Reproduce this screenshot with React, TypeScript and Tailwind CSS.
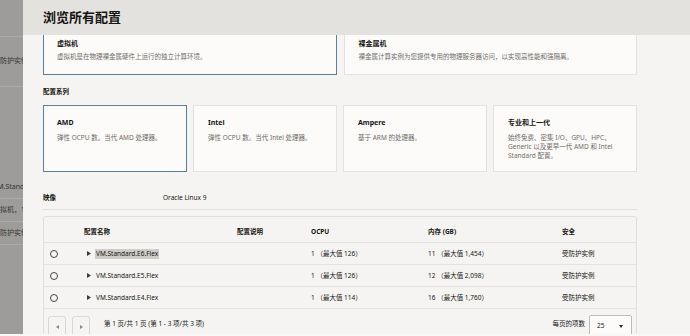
import { ReactNode } from 'react';

const FONT = { fontFamily: '"Noto Sans", "Noto Sans CJK SC", sans-serif' };

const families = [
  { name: 'AMD', desc: ['弹性 OCPU 数。当代 AMD 处理器。'], selected: true },
  { name: 'Intel', desc: ['弹性 OCPU 数。当代 Intel 处理器。'] },
  { name: 'Ampere', desc: ['基于 ARM 的处理器。'] },
  {
    name: '专业和上一代',
    desc: ['始终免费、密集 I/O、GPU、HPC、', 'Generic 以及更早一代 AMD 和 Intel', 'Standard 配置。'],
  },
];

const shapes = [
  { name: 'VM.Standard.E6.Flex', ocpu: '1 （最大值 126）', mem: '11 （最大值 1,454）', highlight: true },
  { name: 'VM.Standard.E5.Flex', ocpu: '1 （最大值 126）', mem: '12 （最大值 2,098）' },
  { name: 'VM.Standard.E4.Flex', ocpu: '1 （最大值 114）', mem: '16 （最大值 1,760）' },
];

const COLS = 'grid grid-cols-[40px_153px_74px_117px_134px_1fr]';

function Caret() {
  return (
    <svg width="4" height="5" viewBox="0 0 4 5" className="shrink-0">
      <path d="M0 0 L4 2.5 L0 5 Z" fill="#3d3b39" />
    </svg>
  );
}

function BackRow({ children, h, border = true }: { children?: ReactNode; h: number; border?: boolean }) {
  return (
    <div
      className={`flex items-center overflow-hidden whitespace-nowrap ${border ? 'border-b border-[#aaa9a7]' : ''}`}
      style={{ height: h }}
    >
      <span className="-ml-[7px] text-[7px] text-[#343331]">{children}</span>
    </div>
  );
}

export default function App() {
  return (
    <div className="relative w-[690px] h-[336px] overflow-hidden bg-[#9d9c9a]" style={FONT}>
      {/* page behind the drawer */}
      <div className="flex flex-col w-[23px]">
        <BackRow h={37} />
        <BackRow h={50}>受防护实例</BackRow>
        <div className="h-[90px]" />
        <BackRow h={22}>VM.Standard</BackRow>
        <BackRow h={23}>虚拟机，1</BackRow>
        <BackRow h={23}>受防护实例</BackRow>
      </div>

      {/* drawer */}
      <div className="absolute top-0 right-0 bottom-[2px] w-[667px] flex flex-col bg-[#f5f4f2] text-[#161513]">
        <div className="h-[35px] shrink-0 flex items-center pl-[20px] bg-[#e4e2df]">
          <h1 className="text-[13px] font-bold leading-none">浏览所有配置</h1>
        </div>

        <div className="flex-1 overflow-hidden pl-[20px]">
          <div className="w-[594px]">
            {/* compute type, scrolled partly out of view */}
            <div className="grid grid-cols-2 gap-[7px] h-[40px]">
              <div className="border-[1.5px] border-t-0 border-[#5f7e97] bg-[#fcfbfa] pl-[13px] pt-[4px]">
                <div className="text-[7px] font-bold leading-[10px]">虚拟机</div>
                <div className="mt-[3px] text-[6.5px] leading-[10px] text-[#6f6c69]">
                  虚拟机是在物理裸金属硬件上运行的独立计算环境。
                </div>
              </div>
              <div className="border border-t-0 border-[#e4e2df] bg-[#fcfbfa] pl-[14px] pt-[4px]">
                <div className="text-[7px] font-bold leading-[10px]">裸金属机</div>
                <div className="mt-[3px] text-[6.5px] leading-[10px] text-[#6f6c69]">
                  裸金属计算实例为您提供专用的物理服务器访问，以实现高性能和强隔离。
                </div>
              </div>
            </div>

            <div className="mt-[12px] text-[6.5px] font-bold leading-[10px]">配置系列</div>

            <div className="mt-[8px] grid grid-cols-4 gap-[6px]">
              {families.map((f) => (
                <div
                  key={f.name}
                  className={`h-[67px] bg-[#fcfbfa] pt-[12px] ${
                    f.selected ? 'border-[1.5px] border-[#5f7e97] pl-[13px]' : 'border border-[#e4e2df] pl-[14px]'
                  }`}
                >
                  <div className="text-[7px] font-bold leading-[10px]">{f.name}</div>
                  <div className="mt-[5px] text-[6.5px] leading-[9px] text-[#6f6c69]">
                    {f.desc.map((d) => (
                      <div key={d}>{d}</div>
                    ))}
                  </div>
                </div>
              ))}
            </div>

            <div className="mt-[21px] flex pb-[6px] border-b border-[#e4e2df] text-[6.5px] leading-[10px]">
              <div className="w-[120px] font-bold">映像</div>
              <div>Oracle Linux 9</div>
            </div>

            {/* shape table */}
            <div className="mt-[6px] border border-[#e0deda] rounded-[3px] bg-[#f5f4f2] text-[6.5px]">
              <div className={`${COLS} h-[26px] items-end pb-[5px] border-b border-[#e4e2df] font-bold leading-[10px]`}>
                <div />
                <div>配置名称</div>
                <div>配置说明</div>
                <div>OCPU</div>
                <div>内存 (GB)</div>
                <div>安全</div>
              </div>
              {shapes.map((s) => (
                <div key={s.name} className={`${COLS} h-[22px] items-center border-b border-[#e4e2df] leading-[10px]`}>
                  <div className="pl-[6px]">
                    <div className="w-[8px] h-[8px] rounded-full border border-[#4a4846]" />
                  </div>
                  <div className="flex items-center gap-[4px] pl-[3px]">
                    <Caret />
                    <span className={`px-[1px] ${s.highlight ? 'bg-[#cfcdca]' : ''}`}>{s.name}</span>
                  </div>
                  <div />
                  <div>{s.ocpu}</div>
                  <div>{s.mem}</div>
                  <div>受防护实例</div>
                </div>
              ))}
              <div className="flex items-start pt-[7px] pl-[4px] pr-[4px] h-[30px]">
                <button className="w-[18px] h-[21px] rounded-[3px] border border-[#d8d6d2] flex items-center justify-center">
                  <svg width="3" height="4" viewBox="0 0 3 4">
                    <path d="M3 0 L0 2 L3 4 Z" fill="#8a8784" />
                  </svg>
                </button>
                <button className="ml-[6px] w-[18px] h-[21px] rounded-[3px] border border-[#d8d6d2] flex items-center justify-center">
                  <svg width="3" height="4" viewBox="0 0 3 4">
                    <path d="M0 0 L3 2 L0 4 Z" fill="#8a8784" />
                  </svg>
                </button>
                <div className="ml-[14px] mt-[3px] leading-[10px]">第 1 页/共 1 页 (第 1 - 3 项/共 3 项)</div>
                <div className="ml-auto flex items-start">
                  <div className="mt-[3px] leading-[10px]">每页的项数</div>
                  <div className="ml-[4px] w-[43px] h-[22px] -mt-[1px] rounded-[2px] border border-[#bdbbb7] bg-[#fcfbfa] flex items-center pl-[7px] pr-[8px] justify-between">
                    <span className="leading-[10px]">25</span>
                    <svg width="4" height="3" viewBox="0 0 4 3">
                      <path d="M0 0 L4 0 L2 3 Z" fill="#2f2d2b" />
                    </svg>
                  </div>
                </div>
              </div>
            </div>
          </div>
        </div>
      </div>

      <div className="absolute left-0 right-0 bottom-0 h-[2px] bg-[#f8f8f7]" />
    </div>
  );
}
